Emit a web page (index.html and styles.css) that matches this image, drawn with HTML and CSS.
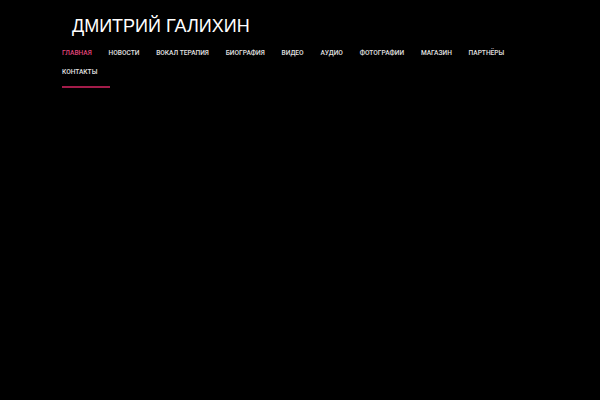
FILE: index.html
```html
<!DOCTYPE html>
<html lang="ru">
<head>
<meta charset="utf-8">
<title>Дмитрий Галихин</title>
<link rel="stylesheet" href="styles.css">
</head>
<body>
<header class="site-header">
  <div class="site-title">ДМИТРИЙ ГАЛИХИН</div>
  <nav class="main-nav">
    <a class="nav-item active" href="#">ГЛАВНАЯ</a>
    <a class="nav-item" href="#">НОВОСТИ</a>
    <a class="nav-item" href="#">ВОКАЛ ТЕРАПИЯ</a>
    <a class="nav-item" href="#">БИОГРАФИЯ</a>
    <a class="nav-item" href="#">ВИДЕО</a>
    <a class="nav-item" href="#">АУДИО</a>
    <a class="nav-item" href="#">ФОТОГРАФИИ</a>
    <a class="nav-item" href="#">МАГАЗИН</a>
    <a class="nav-item" href="#">ПАРТНЁРЫ</a>
    <a class="nav-item" href="#">КОНТАКТЫ</a>
  </nav>
  <div class="nav-line"></div>
</header>
</body>
</html>
```

FILE: styles.css
```css
html, body {
  margin: 0;
  padding: 0;
  background: #000;
  height: 100%;
}
body {
  font-family: "Roboto", "Liberation Sans", sans-serif;
  color: #fff;
}
.site-header {
  padding: 11px 62px 0 62px;
}
.site-title {
  padding-left: 10px;
  font-family: "Liberation Sans", sans-serif;
  font-size: 18px;
  line-height: 30px;
  font-weight: 400;
  color: #fff;
}
.main-nav {
  margin-top: 3px;
  display: flex;
  flex-wrap: wrap;
  column-gap: 16.8px;
}
.nav-item {
  font-size: 6.6px;
  line-height: 19px;
  font-weight: 500;
  color: #e2e2e2;
  text-decoration: none;
  white-space: nowrap;
}
.nav-item.active {
  color: #e0457b;
}
.nav-line {
  margin-top: 4px;
  width: 48px;
  height: 2px;
  background: #a31c4a;
}
```
